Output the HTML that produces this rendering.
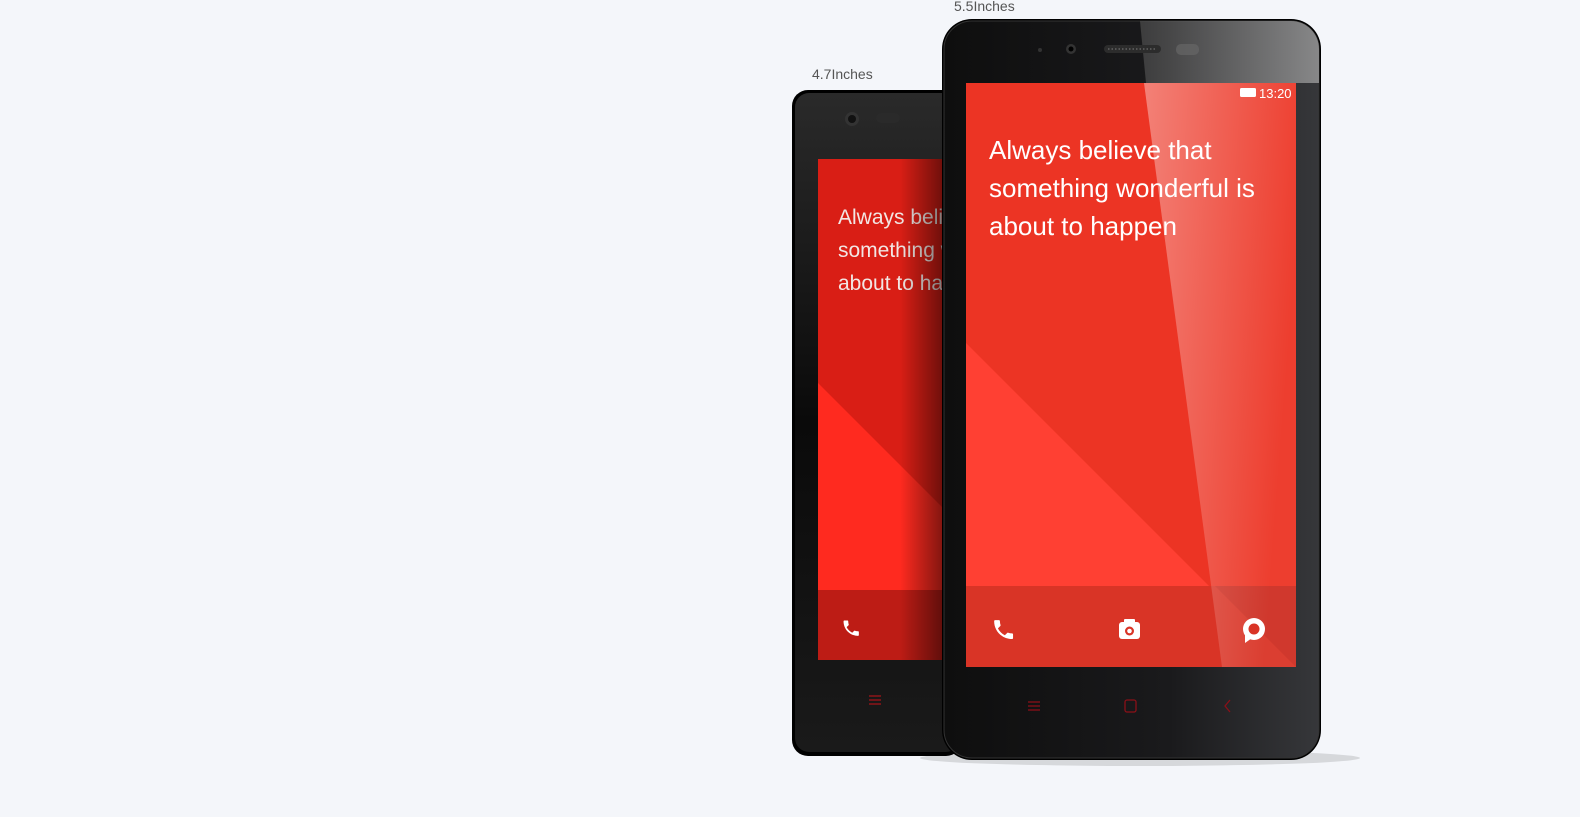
<!DOCTYPE html>
<html><head><meta charset="utf-8"><style>
html,body{margin:0;padding:0;background:#f4f6fa;width:1580px;height:817px;overflow:hidden}
svg{display:block}
text{font-family:"Liberation Sans",sans-serif}
</style></head><body>
<svg width="1580" height="817" viewBox="0 0 1580 817" xmlns="http://www.w3.org/2000/svg">
<defs>
 <linearGradient id="bz1" x1="0" y1="0" x2="0" y2="1">
  <stop offset="0" stop-color="#2a2a2a"/><stop offset="0.5" stop-color="#0a0a0a"/><stop offset="1" stop-color="#1a1a1a"/>
 </linearGradient>
 <linearGradient id="bz2" x1="0" y1="0" x2="1" y2="0">
  <stop offset="0" stop-color="#0e0e0e"/><stop offset="0.6" stop-color="#1a1a1c"/><stop offset="1" stop-color="#36373a"/>
 </linearGradient>
 <linearGradient id="glare" x1="0" y1="0" x2="1" y2="0.3">
  <stop offset="0" stop-color="#fff" stop-opacity="0.38"/><stop offset="1" stop-color="#fff" stop-opacity="0.05"/>
 </linearGradient>
 <linearGradient id="glareTop" x1="0" y1="0" x2="1" y2="0">
  <stop offset="0" stop-color="#555" stop-opacity="0.6"/><stop offset="1" stop-color="#aaa" stop-opacity="0.7"/>
 </linearGradient>
 <linearGradient id="shd" x1="0" y1="0" x2="1" y2="0">
  <stop offset="0" stop-color="#000" stop-opacity="0"/><stop offset="1" stop-color="#000" stop-opacity="0.55"/>
 </linearGradient>
 <clipPath id="sc1"><rect x="818" y="159" width="130" height="501"/></clipPath>
 <clipPath id="sc2"><rect x="966" y="83" width="330" height="584"/></clipPath>
 <clipPath id="bzc2"><rect x="944" y="21" width="375" height="737" rx="28"/></clipPath>
 <path id="ph" d="M6.6 10.8c1.4 2.8 3.8 5.1 6.6 6.6l2.2-2.2c.3-.3.7-.4 1-.2 1.1.4 2.3.6 3.6.6.6 0 1 .4 1 1V20c0 .6-.4 1-1 1-9.4 0-17-7.6-17-17 0-.6.4-1 1-1h3.5c.6 0 1 .4 1 1 0 1.3.2 2.5.6 3.6.1.3 0 .7-.2 1L6.6 10.8z"/>
</defs>

<text x="812" y="79" font-size="14" fill="#555">4.7Inches</text>
<text x="954" y="11" font-size="14" fill="#555">5.5Inches</text>

<!-- small phone -->
<rect x="792" y="90" width="170" height="666" rx="16" fill="#000"/>
<rect x="795" y="93" width="165" height="659" rx="14" fill="url(#bz1)"/>
<circle cx="852" cy="119" r="7" fill="#333"/><circle cx="852" cy="119" r="4" fill="#111"/>
<rect x="876" y="113" width="24" height="10" rx="5" fill="#2a2a2a"/>
<g clip-path="url(#sc1)">
 <rect x="818" y="159" width="130" height="501" fill="#d91e15"/>
 <polygon points="818,383 1025,590 818,590" fill="#ff2a1f"/>
 <rect x="818" y="590" width="130" height="70" fill="#bd1c15"/>
 <text x="838" y="224" font-size="21" fill="#f2e6e4">Always believe that</text>
 <text x="838" y="257" font-size="21" fill="#f2e6e4">something wonderful is</text>
 <text x="838" y="290" font-size="21" fill="#f2e6e4">about to happen</text>
 <use href="#ph" transform="translate(841,618) scale(0.85)" fill="#fff"/>
 <rect x="900" y="159" width="48" height="501" fill="url(#shd)"/>
</g>
<g stroke="#a0141a" stroke-width="1.3"><line x1="869" y1="696" x2="881" y2="696"/><line x1="869" y1="700" x2="881" y2="700"/><line x1="869" y1="704" x2="881" y2="704"/></g>

<!-- big phone shadow -->
<ellipse cx="1140" cy="758" rx="220" ry="8" fill="#000" opacity="0.12"/>
<!-- big phone -->
<rect x="942" y="19" width="379" height="741" rx="30" fill="#000"/>
<rect x="944" y="21" width="375" height="737" rx="28" fill="url(#bz2)" stroke="#333" stroke-width="1"/>
<g clip-path="url(#bzc2)">
 <polygon points="1140,21 1319,21 1319,83 1146,83" fill="url(#glareTop)"/>
</g>
<circle cx="1040" cy="50" r="2" fill="#333"/>
<circle cx="1071" cy="49" r="5" fill="#333"/><circle cx="1071" cy="49" r="2.5" fill="#000"/>
<rect x="1104" y="45" width="57" height="8" rx="4" fill="#2c2c2c"/>
<line x1="1108" y1="49" x2="1157" y2="49" stroke="#555" stroke-width="2" stroke-dasharray="1.5 2"/>
<rect x="1176" y="44" width="23" height="11" rx="5" fill="#6a6a6a" opacity="0.6"/>
<g clip-path="url(#sc2)">
 <rect x="966" y="83" width="330" height="584" fill="#ec3424"/>
 <polygon points="966,343 1213,590 966,590" fill="#ff4033"/>
 <rect x="966" y="586" width="330" height="81" fill="#d93426"/>
 <polygon points="1215,586 1296,586 1296,667" fill="#c92d22" opacity="0.8"/>
 <polygon points="1144,83 1296,83 1296,667 1222,667" fill="url(#glare)"/>
 <rect x="1240" y="88" width="16" height="9" rx="1.5" fill="#fff"/>
 <text x="1259" y="98" font-size="13" fill="#fff">13:20</text>
 <text x="989" y="159" font-size="26" fill="#fff">Always believe that</text>
 <text x="989" y="197" font-size="26" fill="#fff">something wonderful is</text>
 <text x="989" y="235" font-size="26" fill="#fff">about to happen</text>
 <use href="#ph" transform="translate(991,617) scale(1.05)" fill="#fff"/>
 <rect x="1119" y="622" width="21" height="17" rx="3" fill="#fff"/>
 <rect x="1124" y="619" width="11" height="5" rx="1" fill="#fff"/>
 <circle cx="1129.5" cy="631" r="4.5" fill="#d93426"/><circle cx="1129.5" cy="631" r="2.3" fill="#fff"/>
 <circle cx="1254" cy="629" r="11" fill="#fff"/>
 <polygon points="1245,634 1252,638 1245,643" fill="#fff"/>
 <circle cx="1254" cy="629" r="5.5" fill="#d93426"/>
</g>
<g stroke="#8a1018" stroke-width="1.3" fill="none">
 <line x1="1028" y1="702" x2="1040" y2="702"/><line x1="1028" y1="706" x2="1040" y2="706"/><line x1="1028" y1="710" x2="1040" y2="710"/>
 <rect x="1125" y="700" width="11" height="12" rx="2"/>
 <polyline points="1230,700 1225,706 1230,712"/>
</g>
</svg>
</body></html>
